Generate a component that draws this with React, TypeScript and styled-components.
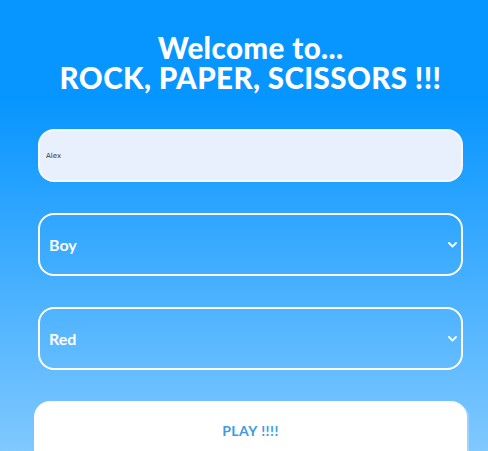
import React from "react";
import styled, { createGlobalStyle } from "styled-components";

const GlobalStyle = createGlobalStyle`
  html, body { margin: 0; padding: 0; }
  body {
    font-family: "Lato", "Open Sans", sans-serif;
    background: #0795ff;
  }
`;

const Page = styled.div`
  box-sizing: border-box;
  height: 451px;
  overflow: hidden;
  background: linear-gradient(180deg, #0795ff 0%, #0795ff 22%, #80c8ff 100%);
  padding: 33px 21px 0 34px;
`;

const Title = styled.h1`
  margin: 0 0 36px;
  text-align: center;
  color: #ffffff;
  font-family: "Lato", sans-serif;
  font-weight: 900;
  font-size: 29.5px;
  line-height: 30px;
  letter-spacing: 0.4px;
`;

const Form = styled.form`
  display: flex;
  flex-direction: column;
  gap: 31px;
`;

const FieldWrap = styled.div`
  padding: 0 4px;
  position: relative;
`;

const TextInput = styled.input`
  box-sizing: border-box;
  width: 100%;
  height: 53px;
  border: 2px solid #f4f8ff;
  border-radius: 16px;
  background: #e8f0fe;
  color: #333;
  font-family: "DejaVu Sans", sans-serif;
  font-size: 7px;
  padding: 0 6px;
  outline: none;
`;

const Select = styled.select`
  box-sizing: border-box;
  width: 100%;
  height: 63px;
  border: 2px solid #ffffff;
  border-radius: 16px;
  background: transparent;
  color: #ffffff;
  font-family: "Lato", sans-serif;
  font-weight: 700;
  font-size: 16px;
  padding: 0 10px 0 9px;
  appearance: none;
  -webkit-appearance: none;
  outline: none;
`;

const Chevron = styled.svg`
  position: absolute;
  right: 10px;
  top: 50%;
  transform: translateY(-50%);
  width: 9px;
  height: 6px;
  pointer-events: none;
`;

const PlayButton = styled.button`
  box-sizing: border-box;
  width: 100%;
  height: 70px;
  border: none;
  border-radius: 16px;
  background: #ffffff;
  color: #3b9be8;
  font-family: "Lato", sans-serif;
  font-weight: 700;
  font-size: 14px;
  letter-spacing: 0.5px;
  padding: 0 0 12px;
  box-shadow: 6px 0 0 -4px rgba(255, 255, 255, 0.25);
`;

const ChevronIcon = () => (
  <Chevron viewBox="0 0 9 6">
    <path d="M1 1 L4.5 4.5 L8 1" fill="none" stroke="#fff" strokeWidth="1.8" strokeLinecap="round" strokeLinejoin="round" />
  </Chevron>
);

export default function App() {
  return (
    <>
      <GlobalStyle />
      <Page>
        <Title>
          Welcome to...
          <br />
          ROCK, PAPER, SCISSORS !!!
        </Title>
        <Form onSubmit={(e) => e.preventDefault()}>
          <FieldWrap>
            <TextInput defaultValue="Alex" />
          </FieldWrap>
          <FieldWrap>
            <Select defaultValue="Boy">
              <option>Boy</option>
              <option>Girl</option>
            </Select>
            <ChevronIcon />
          </FieldWrap>
          <FieldWrap>
            <Select defaultValue="Red">
              <option>Red</option>
              <option>Blue</option>
              <option>Green</option>
            </Select>
            <ChevronIcon />
          </FieldWrap>
          <PlayButton type="submit">PLAY !!!!</PlayButton>
        </Form>
      </Page>
    </>
  );
}
